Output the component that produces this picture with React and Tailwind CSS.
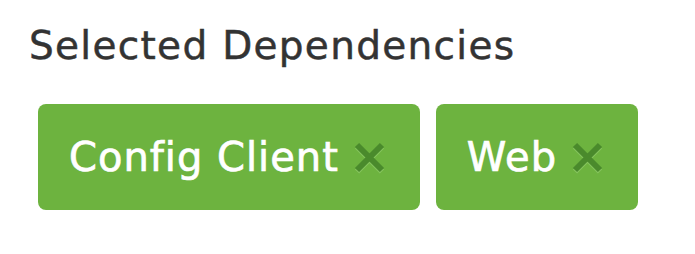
import React from "react";

const deps = ["Config Client", "Web"];

function Chip({ label }) {
  return (
    <div className="flex items-center h-[106px] pl-[31px] pr-[35px] rounded-[8px] bg-[#6db33f]">
      <span className="text-[40px] leading-none text-white tracking-[1px] [-webkit-text-stroke:0.7px_white]">{label}</span>
      <svg width="31" height="32" viewBox="0 0 31 32" className="ml-[15px] mt-[2px]">
        <path d="M3 3 L28 28 M28 3 L3 28" stroke="#86c45e" strokeWidth="6" transform="translate(0 1.5)" />
        <path d="M3 3 L28 28 M28 3 L3 28" stroke="#4a8a2c" strokeWidth="6" />
      </svg>
    </div>
  );
}

export default function App() {
  return (
    <div className="w-[695px] h-[254px] bg-white px-[29px] pt-[22px]" style={{ fontFamily: '"DejaVu Sans", "Noto Sans", sans-serif' }}>
      <h2 className="text-[39px] leading-[48px] text-[#333333] tracking-[1.3px] [-webkit-text-stroke:0.5px_#333333]">Selected Dependencies</h2>
      <div className="flex gap-[16px] mt-[34px] pl-[9px]">
        {deps.map((d) => (
          <Chip key={d} label={d} />
        ))}
      </div>
    </div>
  );
}
